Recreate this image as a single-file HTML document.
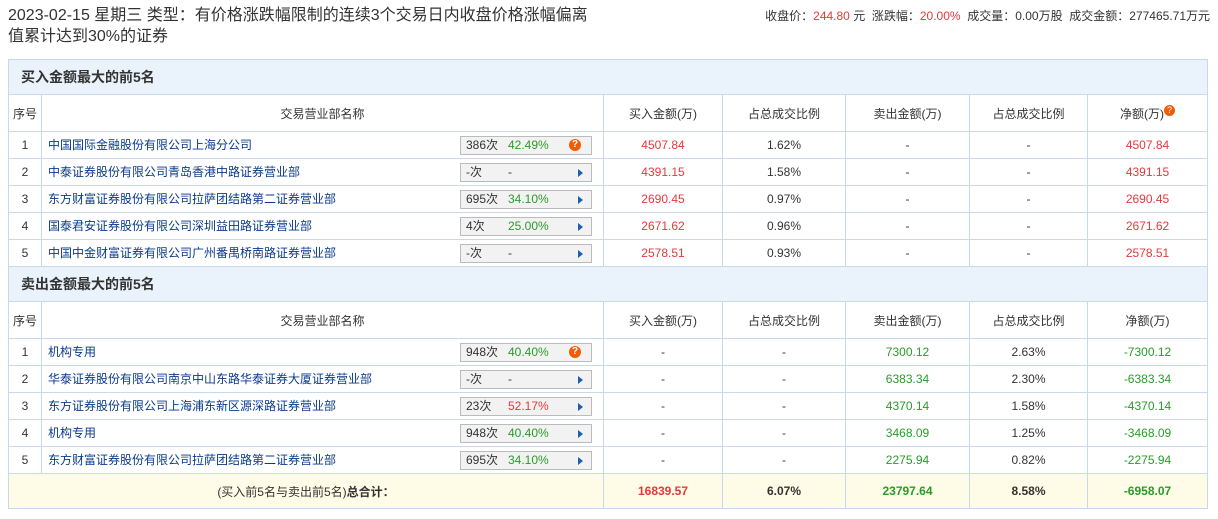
<!DOCTYPE html>
<html><head><meta charset="utf-8"><style>
body{margin:0;background:#fff;font-family:"Liberation Sans","Noto Sans CJK SC",sans-serif;color:#333;width:1218px;height:519px;overflow:hidden;position:relative}
.title{position:absolute;left:8px;top:5px;font-size:16px;line-height:21px;color:#333;width:640px;white-space:nowrap}
.info{position:absolute;right:8px;top:7px;font-size:12px;color:#333}
.r{color:#e4393c}.g{color:#2a9b2a}
table{position:absolute;left:8px;border-collapse:collapse;width:1199px;table-layout:fixed;font-size:12px}
td{border:1px solid #c8d9ea;text-align:center;padding:0;height:26px}
.sec td{background:#eaf3fb;height:34px;text-align:left;padding-left:12px;font-weight:bold;font-size:14px;color:#333}
.hd td{height:36px;font-size:12px}
td.nm{text-align:left;padding-left:6px;color:#0a3a8a;position:relative}
td.nm span.t{position:relative;top:-1px}
.box{position:absolute;left:418px;top:4px;width:130px;height:17px;border:1px solid #bbb;background:#f2f2f2;font-size:12px;line-height:17px;color:#333}
.box .c{position:absolute;left:5px}.box .p{position:absolute;left:47px}
.box .a{position:absolute;right:8px;top:5px;width:0;height:0;border-left:5px solid #1a5fb4;border-top:4px solid transparent;border-bottom:4px solid transparent}
.box .q{position:absolute;right:10px;top:2px;width:12px;height:12px;border-radius:6px;background:#f25c05;color:#fff;font-size:10px;line-height:12px;text-align:center;font-weight:bold}
.tot td{background:#fefbe6;height:34px;font-weight:bold}
</style></head><body>
<div class="title">2023-02-15 星期三 类型：有价格涨跌幅限制的连续3个交易日内收盘价格涨幅偏离<br>值累计达到30%的证券</div>
<div class="info">收盘价：<span class="r">244.80</span> 元&nbsp; 涨跌幅：<span class="r">20.00%</span>&nbsp; 成交量：0.00万股&nbsp; 成交金额：277465.71万元</div>
<table style="top:59px">
<colgroup><col style="width:33px"><col style="width:562px"><col style="width:119px"><col style="width:123px"><col style="width:124px"><col style="width:118px"><col style="width:120px"></colgroup>
<tr class="sec"><td colspan="7">买入金额最大的前5名</td></tr>
<tr class="hd"><td>序号</td><td>交易营业部名称</td><td>买入金额(万)</td><td>占总成交比例</td><td>卖出金额(万)</td><td>占总成交比例</td><td>净额(万)<span style="display:inline-block;width:11px;height:11px;border-radius:6px;background:#f25c05;color:#fff;font-size:9px;line-height:11px;vertical-align:top">?</span></td></tr>
<tr><td>1</td><td class="nm"><span class="t">中国国际金融股份有限公司上海分公司</span><div class="box"><span class="c">386次</span><span class="p g">42.49%</span><span class="q">?</span></div></td><td class="r">4507.84</td><td>1.62%</td><td>-</td><td>-</td><td class="r">4507.84</td></tr>
<tr><td>2</td><td class="nm"><span class="t">中泰证券股份有限公司青岛香港中路证券营业部</span><div class="box"><span class="c">-次</span><span class="p">-</span><span class="a"></span></div></td><td class="r">4391.15</td><td>1.58%</td><td>-</td><td>-</td><td class="r">4391.15</td></tr>
<tr><td>3</td><td class="nm"><span class="t">东方财富证券股份有限公司拉萨团结路第二证券营业部</span><div class="box"><span class="c">695次</span><span class="p g">34.10%</span><span class="a"></span></div></td><td class="r">2690.45</td><td>0.97%</td><td>-</td><td>-</td><td class="r">2690.45</td></tr>
<tr><td>4</td><td class="nm"><span class="t">国泰君安证券股份有限公司深圳益田路证券营业部</span><div class="box"><span class="c">4次</span><span class="p g">25.00%</span><span class="a"></span></div></td><td class="r">2671.62</td><td>0.96%</td><td>-</td><td>-</td><td class="r">2671.62</td></tr>
<tr><td>5</td><td class="nm"><span class="t">中国中金财富证券有限公司广州番禺桥南路证券营业部</span><div class="box"><span class="c">-次</span><span class="p">-</span><span class="a"></span></div></td><td class="r">2578.51</td><td>0.93%</td><td>-</td><td>-</td><td class="r">2578.51</td></tr>
<tr class="sec"><td colspan="7">卖出金额最大的前5名</td></tr>
<tr class="hd"><td>序号</td><td>交易营业部名称</td><td>买入金额(万)</td><td>占总成交比例</td><td>卖出金额(万)</td><td>占总成交比例</td><td>净额(万)</td></tr>
<tr><td>1</td><td class="nm"><span class="t">机构专用</span><div class="box"><span class="c">948次</span><span class="p g">40.40%</span><span class="q">?</span></div></td><td>-</td><td>-</td><td class="g">7300.12</td><td>2.63%</td><td class="g">-7300.12</td></tr>
<tr><td>2</td><td class="nm"><span class="t">华泰证券股份有限公司南京中山东路华泰证券大厦证券营业部</span><div class="box"><span class="c">-次</span><span class="p">-</span><span class="a"></span></div></td><td>-</td><td>-</td><td class="g">6383.34</td><td>2.30%</td><td class="g">-6383.34</td></tr>
<tr><td>3</td><td class="nm"><span class="t">东方证券股份有限公司上海浦东新区源深路证券营业部</span><div class="box"><span class="c">23次</span><span class="p r">52.17%</span><span class="a"></span></div></td><td>-</td><td>-</td><td class="g">4370.14</td><td>1.58%</td><td class="g">-4370.14</td></tr>
<tr><td>4</td><td class="nm"><span class="t">机构专用</span><div class="box"><span class="c">948次</span><span class="p g">40.40%</span><span class="a"></span></div></td><td>-</td><td>-</td><td class="g">3468.09</td><td>1.25%</td><td class="g">-3468.09</td></tr>
<tr><td>5</td><td class="nm"><span class="t">东方财富证券股份有限公司拉萨团结路第二证券营业部</span><div class="box"><span class="c">695次</span><span class="p g">34.10%</span><span class="a"></span></div></td><td>-</td><td>-</td><td class="g">2275.94</td><td>0.82%</td><td class="g">-2275.94</td></tr>
<tr class="tot"><td colspan="2"><span style="font-weight:normal">(买入前5名与卖出前5名)</span>总合计：</td><td class="r">16839.57</td><td>6.07%</td><td class="g">23797.64</td><td>8.58%</td><td class="g">-6958.07</td></tr>
</table>
</body></html>
